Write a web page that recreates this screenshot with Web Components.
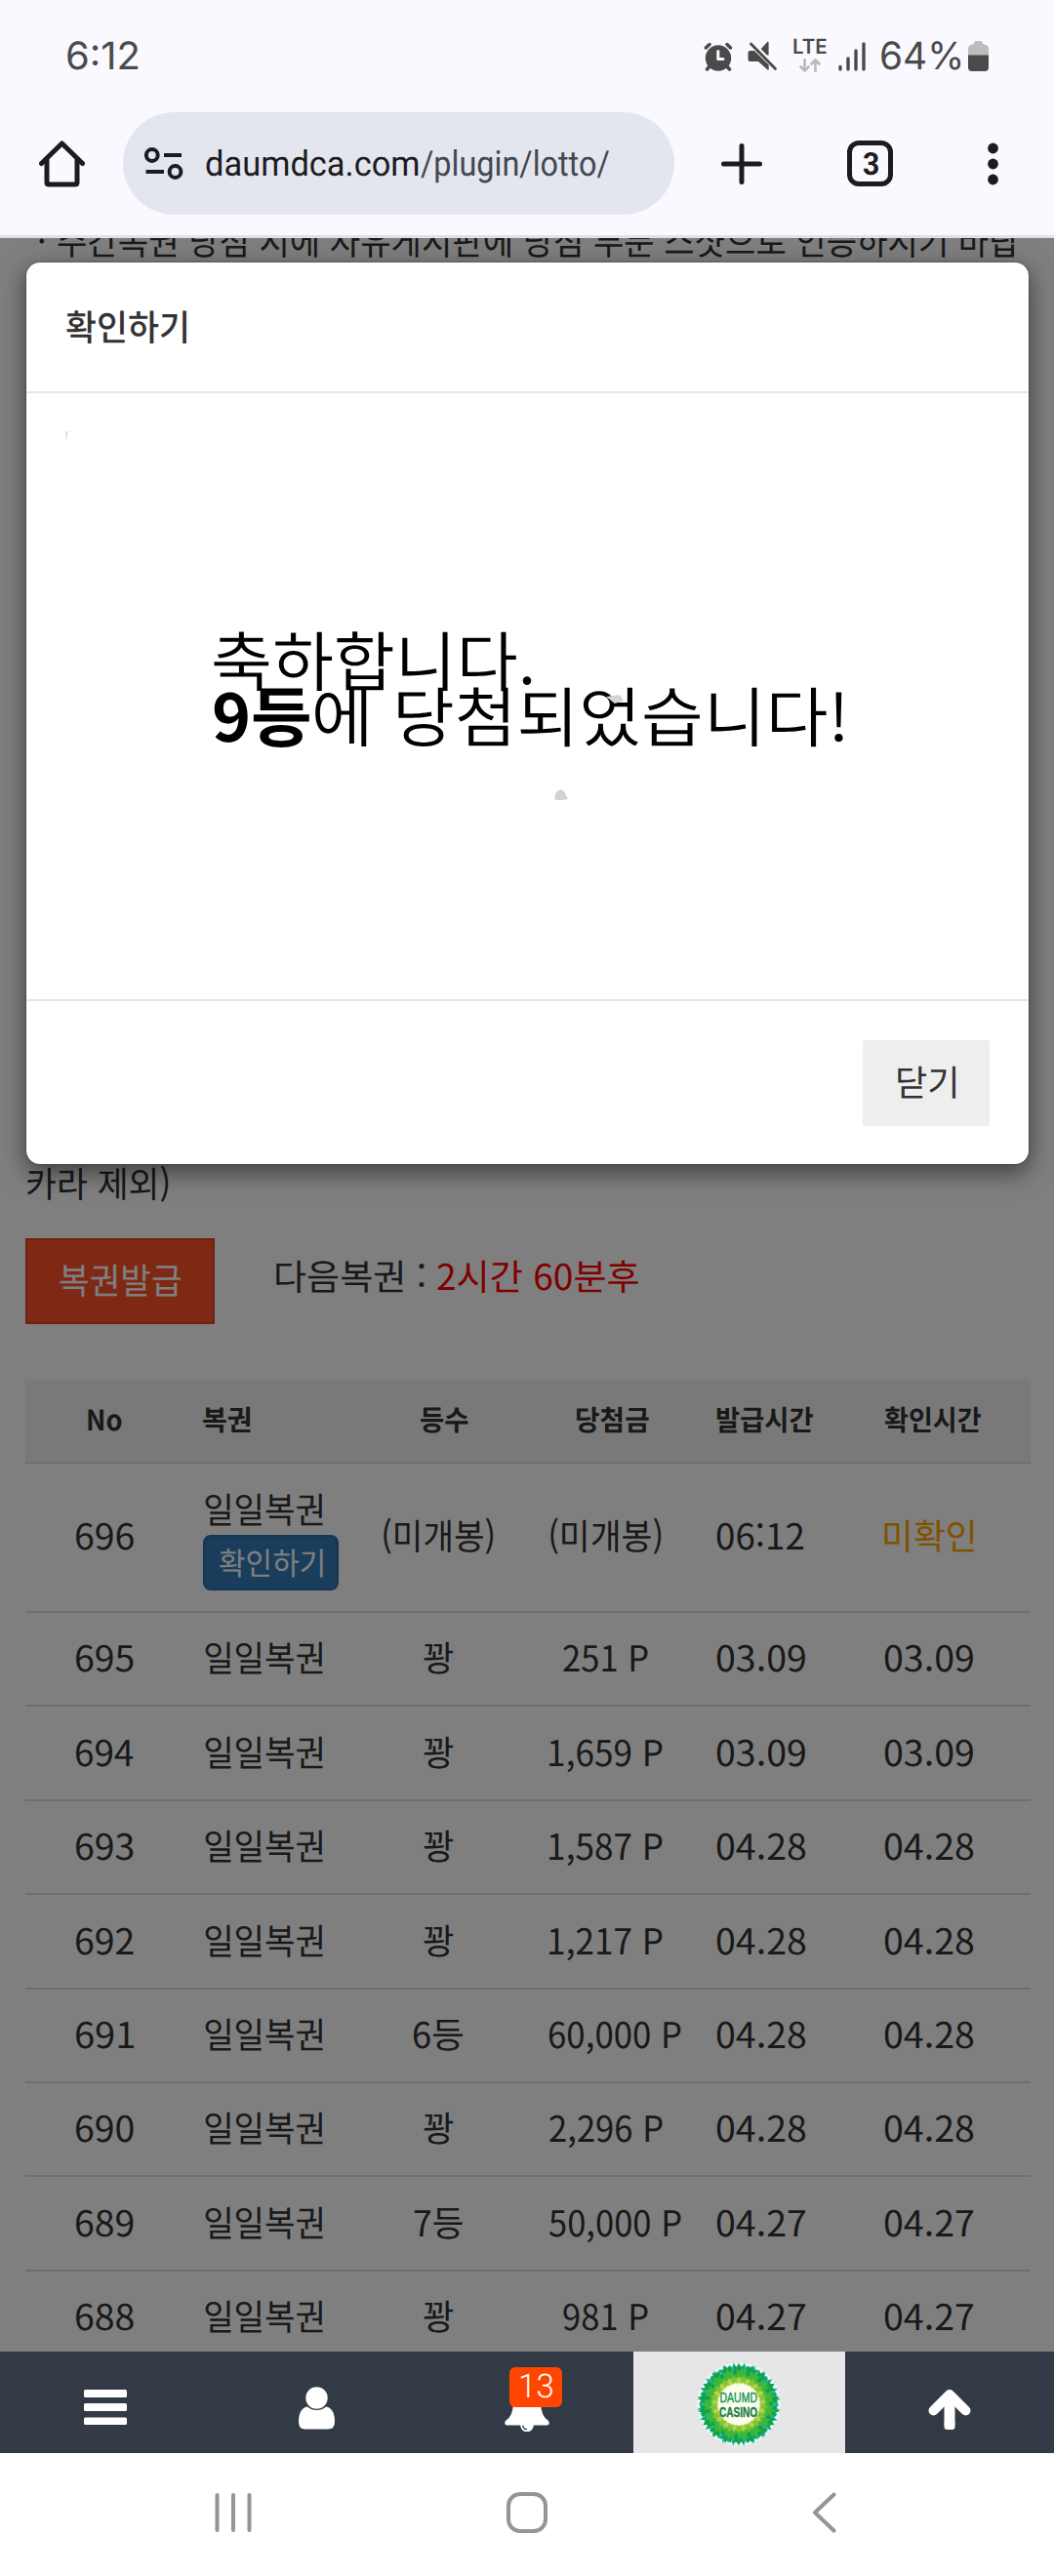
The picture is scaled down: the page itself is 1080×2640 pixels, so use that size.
<!DOCTYPE html>
<html lang="ko">
<head>
<meta charset="utf-8">
<title>복권</title>
<style>
    body {
        margin: 0;
        background: #fff;
        font-family: "Noto Sans CJK KR", sans-serif;
        font-size: 36.6px;
        color: #333;
    }
</style>
</head>
<body>
<phone-screen>
    <status-bar slot="top"></status-bar>
    <browser-toolbar slot="top" tabs="3"></browser-toolbar>
    <lotto-page></lotto-page>
    <lotto-modal slot="overlay" heading="확인하기" close="닫기"></lotto-modal>
    <tab-bar slot="bottom" unread="13"></tab-bar>
    <system-nav slot="bottom"></system-nav>
</phone-screen>

<script>
const measure = document.createElement("canvas").getContext("2d");

// one line of text whose ink is exactly "w" pixels wide
class FitText extends HTMLElement {
    constructor() {
        super();
        this.attachShadow({ mode: "open" });
        this.shadowRoot.innerHTML = /*html*/ `
            <style>
                :host {
                    display: inline-block;
                    flex: none;
                    line-height: 1;
                    white-space: nowrap;
                    text-rendering: geometricPrecision;
                }
                span {
                    display: block;
                    width: max-content;
                    transform-origin: 0 0;
                }
            </style>
            <span><slot></slot></span>
        `;
    }

    connectedCallback() {
        const css = getComputedStyle(this);
        const span = this.shadowRoot.querySelector("span");
        const target = Number(this.getAttribute("w"));
        measure.font = `${css.fontWeight} ${css.fontSize} ${css.fontFamily}`;
        const m = measure.measureText(this.textContent);
        // the laid out advance can differ from the canvas one, the side bearings do not
        const bearings = m.width - m.actualBoundingBoxLeft - m.actualBoundingBoxRight;
        const advance = span.getBoundingClientRect().width || m.width;
        const scale = target / (advance - bearings);
        this.style.width = target + "px";
        span.style.transform = `translateX(${m.actualBoundingBoxLeft * scale}px) scaleX(${scale})`;
    }
}

class PhoneScreen extends HTMLElement {
    constructor() {
        super();
        this.attachShadow({ mode: "open" });
        this.shadowRoot.innerHTML = /*html*/ `
            <style>
                :host {
                    display: flex;
                    flex-direction: column;
                    width: 1080px;
                    height: 2640px;
                    overflow: hidden;
                }
                main {
                    flex: 1;
                    min-height: 0;
                    position: relative;
                    overflow: hidden;
                    background: #fff;
                }
                .backdrop {
                    position: absolute;
                    inset: 0;
                    background: rgba(0, 0, 0, 0.5);
                }
            </style>
            <slot name="top"></slot>
            <main>
                <slot></slot>
                <div class="backdrop"><slot name="overlay"></slot></div>
            </main>
            <slot name="bottom"></slot>
        `;
    }
}

class StatusBar extends HTMLElement {
    constructor() {
        super();
        this.attachShadow({ mode: "open" });
        this.shadowRoot.innerHTML = /*html*/ `
            <style>
                :host {
                    display: flex;
                    align-items: center;
                    height: 115px;
                    box-sizing: border-box;
                    padding: 0 67px 0 69px;
                    background: #faf9ff;
                    color: #4a4a4a;
                    font: 400 39px Inter, sans-serif;
                }
                .time { margin-right: auto; }
                .pct { margin: 0 8px 0 16px; }
                svg { flex: none; fill: none; }
                .mute { margin-left: 15px; }
                .net {
                    display: flex;
                    flex-direction: column;
                    align-items: center;
                    gap: 3px;
                    margin: 0 11px 0 16px;
                    font-size: 21px;
                    font-weight: 600;
                }
                .net fit-text { height: 16px; line-height: 16px; }
            </style>
            <fit-text class="time" w="72">6:12</fit-text>
            <svg width="30" height="30" viewBox="0 0 30 30" stroke="#4a4a4a" stroke-width="4" stroke-linecap="round">
                <path d="M2.300 6 L6 2.500 M24 2.500 L27.500 6" stroke-width="3.500"/>
                <path d="M7 24 L3.500 28 M23 24 L26.500 28" stroke-width="3.500"/>
                <circle cx="15" cy="16.500" r="13.200" fill="#4a4a4a" stroke="none"/>
                <path d="M14.800 9.500 V17.500 H20" stroke="#faf9ff" stroke-width="3" stroke-linejoin="round"/>
            </svg>
            <svg class="mute" width="31" height="31" viewBox="0 0 31 31">
                <path d="M11.800 10.200 L20.500 .8 Q21.600 .6 21.600 1.800 V14.500 L18.500 14.500 L12 9 Z" fill="#4a4a4a"/>
                <path d="M6 4.500 L28.500 27.500" stroke="#faf9ff" stroke-width="6"/>
                <path d="M3.500 3 L28.500 28.500" stroke="#4a4a4a" stroke-width="2.800" stroke-linecap="round"/>
                <path d="M2.500 10 H7 L21.700 24.500 V29 Q21.700 30.300 20.500 29.600 L11 21 H2.500 Q.5 21 .5 19 V12 Q.5 10 2.500 10 Z" fill="#4a4a4a"/>
            </svg>
            <div class="net">
                <fit-text w="34">LTE</fit-text>
                <svg width="22" height="14" viewBox="0 0 22 14" stroke="#b9b9bb" stroke-width="2.600" stroke-linecap="round" stroke-linejoin="round">
                    <path d="M5.500 1 V12.500 M1.500 8.500 L5.500 12.500 L9.500 8.500 M16.500 13 V1.500 M12.500 5.500 L16.500 1.500 L20.500 5.500"/>
                </svg>
            </div>
            <svg width="29" height="30" viewBox="0 0 29 30" stroke="#4a4a4a" stroke-width="3.400" stroke-linecap="round">
                <path d="M3 25.500 V28 M11 17 V28 M19 9 V28 M27 2 V28"/>
            </svg>
            <fit-text class="pct" w="81">64%</fit-text>
            <svg width="21" height="31" viewBox="0 0 21 31">
                <path d="M6 3 Q6 0 8 0 H13 Q15 0 15 3 L18 4 Q21 5 21 8 V15 H0 V8 Q0 5 3 4 Z" fill="#bdbcbf"/>
                <path d="M0 14.500 H21 V27 Q21 31 17 31 H4 Q0 31 0 27 Z" fill="#4a4a4a"/>
            </svg>
        `;
    }
}

class BrowserToolbar extends HTMLElement {
    constructor() {
        super();
        this.attachShadow({ mode: "open" });
        const tabs = this.getAttribute("tabs");
        this.shadowRoot.innerHTML = /*html*/ `
            <style>
                :host {
                    display: flex;
                    align-items: center;
                    height: 129px;
                    box-sizing: border-box;
                    padding: 0 57px 21px 40px;
                    border-bottom: 3px solid #e0e1ea;
                    background: #faf9ff;
                    color: #1c1b20;
                    font-family: Roboto, sans-serif;
                }
                svg { flex: none; fill: none; stroke: #1c1b20; }
                .url {
                    display: flex;
                    align-items: center;
                    width: 565px;
                    height: 105px;
                    box-sizing: border-box;
                    margin: 0 48px 0 39px;
                    padding-left: 22px;
                    border-radius: 53px;
                    background: #e3e6ef;
                    font-size: 36px;
                }
                .host { margin-left: 23px; }
                .path { margin-left: 2px; color: #44474f; }
                .tabs {
                    display: flex;
                    align-items: center;
                    justify-content: center;
                    width: 47px;
                    height: 47px;
                    box-sizing: border-box;
                    margin: 0 97px 0 87px;
                    border: 5px solid #1c1b20;
                    border-radius: 12px;
                    font-size: 32px;
                    font-weight: 700;
                }
            </style>
            <svg width="47" height="48" viewBox="0 0 47 48" stroke-width="5" stroke-linecap="round" stroke-linejoin="round">
                <path d="M2.500 23.500 L23.500 3 L44.500 23.500"/>
                <path d="M8 20 V43 Q8 45 10 45 H37 Q39 45 39 43 V20"/>
            </svg>
            <div class="url">
                <svg width="40" height="34" viewBox="0 0 40 34" stroke-width="4">
                    <circle cx="7.800" cy="8" r="5.900"/>
                    <path d="M20 8 H38 M1.500 25 H20"/>
                    <circle cx="31.500" cy="25" r="5.900"/>
                </svg>
                <fit-text class="host" w="218">daumdca.com</fit-text>
                <fit-text class="path" w="193">/plugin/lotto/</fit-text>
            </div>
            <svg width="42" height="42" viewBox="0 0 42 42" stroke-width="5" stroke-linecap="round">
                <path d="M21 2.500 V39.500 M2.500 21 H39.500"/>
            </svg>
            <div class="tabs"><fit-text w="16">${tabs}</fit-text></div>
            <svg width="11" height="44" viewBox="0 0 11 44" style="fill: #1c1b20; stroke: none">
                <circle cx="5.500" cy="6" r="5.400"/><circle cx="5.500" cy="22" r="5.400"/><circle cx="5.500" cy="38" r="5.400"/>
            </svg>
        `;
    }
}

class LottoPage extends HTMLElement {
    constructor() {
        super();
        this.attachShadow({ mode: "open" });
        this.shadowRoot.innerHTML = /*html*/ `
            <style>
                :host { display: flow-root; padding: 0 24px 0 26px; }
                .notice { display: flex; align-items: center; height: 37px; }
                .notice.first { margin: -16px 0 929px 15px; }
                .notice.last { margin-left: 2px; }
                .first fit-text + fit-text { margin-left: 14px; }
                .issue { display: flex; align-items: center; margin: 38px 0 57px; }
                button {
                    width: 194px;
                    height: 88px;
                    padding: 0 0 5px;
                    border: 2px solid #d9441f;
                    background: #ff5029;
                    color: #fff;
                    font: inherit;
                }
                .next { margin-left: 63px; padding-bottom: 12px; display: flex; gap: 13px; }
                .red { color: #f00; }
            </style>
            <div class="notice first"><fit-text w="4">·</fit-text><fit-text w="985">주간복권 당첨 시에 자유게시판에 당첨 부분 스샷으로 인증하시기 바랍</fit-text></div>
            <div class="notice last"><fit-text w="144">카라 제외)</fit-text></div>
            <div class="issue">
                <button><fit-text w="124">복권발급</fit-text></button>
                <div class="next">
                    <fit-text w="152">다음복권 :</fit-text>
                    <fit-text class="red" w="206">2시간 60분후</fit-text>
                </div>
            </div>
            <lotto-table></lotto-table>
        `;
    }
}

class LottoTable extends HTMLElement {
    #rows = [
        ["695", "꽝", "251 P", "03.09"],
        ["694", "꽝", "1,659 P", "03.09"],
        ["693", "꽝", "1,587 P", "04.28"],
        ["692", "꽝", "1,217 P", "04.28"],
        ["691", "6등", "60,000 P", "04.28"],
        ["690", "꽝", "2,296 P", "04.28"],
        ["689", "7등", "50,000 P", "04.27"],
        ["688", "꽝", "981 P", "04.27"],
    ];

    constructor() {
        super();
        this.attachShadow({ mode: "open" });

        // ink width of a prize depends on its number of characters
        const prizeWidth = { 5: 87, 7: 116, 8: 136 };

        const body = this.#rows.map(([no, rank, prize, date]) => /*html*/ `
            <div class="row">
                <div><fit-text w="60">${no}</fit-text></div>
                <div><fit-text w="120.600">일일복권</fit-text></div>
                <div><fit-text w="${rank === "꽝" ? 31 : 50}">${rank}</fit-text></div>
                <div><fit-text w="${prizeWidth[prize.length]}">${prize}</fit-text></div>
                <div><fit-text w="91.500">${date}</fit-text></div>
                <div><fit-text w="91.500">${date}</fit-text></div>
            </div>
        `).join("");

        this.shadowRoot.innerHTML = /*html*/ `
            <style>
                :host { display: block; }
                .row {
                    display: grid;
                    grid-template-columns: 162px 183px 156px 207px 172px 150px;
                    height: 96.4px;
                    box-sizing: border-box;
                    border-bottom: 2px solid #ddd;
                }
                .row > div {
                    display: flex;
                    align-items: center;
                    justify-content: safe center;
                    padding-bottom: 3px;
                }
                .row > :nth-child(2) { justify-content: flex-start; padding-left: 22px; }
                .row > :nth-child(4) { padding-left: 35px; padding-right: 55px; }
                .row > :nth-child(5), .row > :nth-child(6) { justify-content: flex-start; }
                .head {
                    height: 86px;
                    background: #f2f2f2;
                    font-size: 29px;
                    font-weight: 700;
                }
                .head > :nth-child(2) { padding-left: 20px; }
                .head > :nth-child(3) { padding-left: 12px; }
                .head > :nth-child(4) { padding-left: 47px; padding-right: 53px; }
                .open { height: 153px; }
                .open > div { padding-bottom: 5px; }
                .open > .ticket {
                    flex-direction: column;
                    align-items: flex-start;
                    justify-content: flex-start;
                    padding-top: 27.500px;
                    padding-left: 20px;
                }
                .ticket > fit-text { margin-left: 2px; }
                button {
                    width: 139px;
                    height: 57px;
                    margin-top: 9px;
                    padding: 0 0 3px;
                    border: 2px solid #2e6da4;
                    border-radius: 8px;
                    background: #337ab7;
                    color: #fff;
                    font: inherit;
                    font-size: 32px;
                    line-height: 1;
                }
                .orange { color: orange; }
            </style>
            <div class="row head">
                <div><fit-text w="34.500">No</fit-text></div>
                <div><fit-text w="49">복권</fit-text></div>
                <div><fit-text w="49">등수</fit-text></div>
                <div><fit-text w="74">당첨금</fit-text></div>
                <div><fit-text w="99">발급시간</fit-text></div>
                <div><fit-text w="99">확인시간</fit-text></div>
            </div>
            <div class="row open">
                <div><fit-text w="60">696</fit-text></div>
                <div class="ticket"><fit-text w="120.600">일일복권</fit-text><button><fit-text w="106">확인하기</fit-text></button></div>
                <div><fit-text w="112">(미개봉)</fit-text></div>
                <div><fit-text w="113">(미개봉)</fit-text></div>
                <div><fit-text w="89.500">06:12</fit-text></div>
                <div><fit-text class="orange" w="92">미확인</fit-text></div>
            </div>
            ${body}
        `;
    }
}

class LottoModal extends HTMLElement {
    constructor() {
        super();
        this.attachShadow({ mode: "open" });
        this.shadowRoot.innerHTML = /*html*/ `
            <style>
                :host {
                    display: flex;
                    flex-direction: column;
                    width: 1029px;
                    margin: 24px 0 0 26px;
                    border: 1.500px solid rgba(0, 0, 0, 0.2);
                    box-sizing: border-box;
                    border-radius: 15px;
                    background: #fff;
                    background-clip: padding-box;
                    box-shadow: 0 8px 25px rgba(0, 0, 0, 0.5);
                }
                header {
                    display: flex;
                    align-items: center;
                    height: 132px;
                    box-sizing: border-box;
                    padding: 0 0 2px 41px;
                    font-weight: 500;
                }
                .body {
                    position: relative;
                    height: 625px;
                    box-sizing: border-box;
                    padding: 243px 0 0 192px;
                    border: solid #e5e5e5;
                    border-width: 2px 0;
                    color: #000;
                    font-size: 67px;
                    font-weight: 350;
                }
                .line { display: flex; height: 57px; }
                .line fit-text { line-height: 57px; }
                .line b { display: contents; font-weight: 700; }
                .line b + fit-text { margin-left: 6px; }
                /* leftovers of the scratch-off cover */
                .body svg { position: absolute; inset: 0; }
                footer {
                    display: flex;
                    justify-content: flex-end;
                    height: 167px;
                    box-sizing: border-box;
                    padding: 40px 40px 0 0;
                }
                button {
                    width: 130px;
                    height: 88px;
                    padding: 0 0 6px;
                    border: 0;
                    background: #eee;
                    color: #333;
                    font: inherit;
                }
            </style>
            <header><fit-text w="123.500">${this.getAttribute("heading")}</fit-text></header>
            <div class="body">
                <div class="line"><fit-text w="326">축하합니다.</fit-text></div>
                <div class="line"><b><fit-text w="98">9등</fit-text></b><fit-text w="541">에 당첨되었습니다!</fit-text></div>
                <svg width="1026" height="621" viewBox="0 0 1026 621">
                    <path d="M40 39 h3 l-2.500 12 Z" fill="#e2e2e2"/>
                    <path d="M541 415 L543 409 L547 406 L551 408 L555 416 L549 417 L543 417 Z" fill="#d2d2d2"/>
                    <path d="M594 311 L608 309 L612 315 L603 318 Z" fill="#d4d4d4"/>
                </svg>
            </div>
            <footer><button><fit-text w="59">${this.getAttribute("close")}</fit-text></button></footer>
        `;
    }
}

class CasinoLogo extends HTMLElement {
    constructor() {
        super();
        this.attachShadow({ mode: "open" });

        const ring = (count, radius, id, fill, offset = 0) => {
            let out = "";
            for (let i = 0; i < count; i++) {
                const angle = (360 / count) * i + offset;
                out += `<use href="#${id}" fill="${fill}" transform="rotate(${angle}) translate(0 ${-radius})"/>`;
            }
            return out;
        };

        this.shadowRoot.innerHTML = /*html*/ `
            <style>
                :host { display: block; width: 88px; height: 88px; }
                text { font-family: "Liberation Sans Narrow", "Liberation Sans", sans-serif; }
            </style>
            <svg width="88" height="88" viewBox="-44 -44 88 88">
                <defs>
                    <path id="leaf" d="M0 -8.500 L2 -4 L6 -6 L4.500 -1 L8 2 L3.500 3 L3 8 L0 5 L-3 8 L-3.500 3 L-8 2 L-4.500 -1 L-6 -6 L-2 -4 Z"/>
                    <path id="flower" d="M0 -4.500 L1.300 -1.800 L4.300 -1.600 L2.200 .8 L2.800 4 L0 2.500 L-2.800 4 L-2.200 .8 L-4.300 -1.600 L-1.300 -1.800 Z"/>
                </defs>
                <circle r="42.500" fill="#eefaf2"/>
                ${ring(24, 34.5, "leaf", "#19b5a5", 8)}
                <circle r="34" fill="#3faf3c"/>
                ${ring(18, 34, "leaf", "#12a04a")}
                ${ring(15, 30, "leaf", "#3cb83c", 5)}
                <circle r="25" fill="#a9cf45"/>
                <circle r="22" fill="#fbfdea"/>
                ${ring(17, 24.5, "flower", "#b3d452")}
                ${ring(17, 26, "flower", "#86c22f", 10)}
                <text x="-19.500" y="-1.800" font-size="14" textLength="38.500" lengthAdjust="spacingAndGlyphs" fill="#129255" stroke="#129255" stroke-width=".4">DAUMD</text>
                <text x="-20" y="12.500" font-size="15" font-weight="700" textLength="39" lengthAdjust="spacingAndGlyphs" fill="#1d7a4c" stroke="#1d7a4c" stroke-width=".4">CASINO</text>
            </svg>
        `;
    }
}

class TabBar extends HTMLElement {
    constructor() {
        super();
        this.attachShadow({ mode: "open" });
        this.shadowRoot.innerHTML = /*html*/ `
            <style>
                :host {
                    display: grid;
                    grid-template-columns: 216px 216px 217px 217px 214px;
                    height: 104px;
                    background: #323b45;
                }
                div { display: flex; align-items: center; justify-content: center; }
                .bell { position: relative; }
                .badge {
                    position: absolute;
                    left: 90px;
                    top: 16px;
                    width: 54px;
                    height: 41px;
                    box-sizing: border-box;
                    padding-bottom: 2px;
                    border-radius: 6px;
                    background: #ff4500;
                    color: #fff;
                    font: 300 34px Roboto, sans-serif;
                }
                .logo { background: #e6e6e6; padding: 3px 2px 0 0; }
                .bell svg { margin: 18px 2px 0 0; }
                .up { padding-right: 1px; }
            </style>
            <div><svg width="44" height="36" viewBox="0 0 44 36" fill="#fff" style="margin-top: 10px">
                <rect y="0" width="44" height="8" rx="1.500"/><rect y="14" width="44" height="8" rx="1.500"/><rect y="28.500" width="44" height="7.500" rx="1.500"/>
            </svg></div>
            <div><svg width="37" height="44" viewBox="0 0 37 44" fill="#fff" style="margin-top: 11px">
                <path d="M9 20.500 Q0 22 0 36 Q0 43.500 6.500 43.500 H30 Q37 43.500 37 36 Q37 22 28 20.500 Q24 24 18.500 24 Q13 24 9 20.500 Z"/>
                <circle cx="18.500" cy="11.500" r="11.200"/>
            </svg></div>
            <div class="bell">
                <svg width="46" height="42" viewBox="0 0 46 42" fill="#fff">
                    <path d="M23 0 Q9 2 9 12 Q9 26 1 31 Q-1 35 2.500 35.500 H43.500 Q47 35 45 31 Q37 26 37 12 Q37 2 23 0 Z"/>
                    <circle cx="23" cy="35.500" r="6.800"/>
                    <path d="M18.800 35.500 Q19 39.500 23 39.700" fill="none" stroke="#323b45" stroke-width="1.200"/>
                </svg>
                <div class="badge"><fit-text w="33">${this.getAttribute("unread")}</fit-text></div>
            </div>
            <div class="logo"><casino-logo></casino-logo></div>
            <div class="up"><svg width="46" height="43" viewBox="0 0 46 43" fill="none" stroke="#fff" stroke-width="10" style="margin-top: 12px">
                <path d="M23 8 V38" stroke-width="11" stroke-linecap="butt"/>
                <path d="M17.500 36 V40 Q17.500 43 20.500 43 H25.500 Q28.500 43 28.500 40 V36 Z" fill="#fff" stroke="none"/>
                <path d="M6.500 23.500 L23 7 L39.500 23.500" stroke-linecap="round" stroke-linejoin="round"/>
            </svg></div>
        `;
    }
}

class SystemNav extends HTMLElement {
    constructor() {
        super();
        this.attachShadow({ mode: "open" });
        this.shadowRoot.innerHTML = /*html*/ `
            <style>
                :host {
                    display: flex;
                    justify-content: space-between;
                    height: 126px;
                    box-sizing: border-box;
                    padding: 40px 223px 0 220px;
                    background: #fff;
                }
                svg { fill: none; stroke: #959595; stroke-width: 4; stroke-linecap: round; stroke-linejoin: round; }
            </style>
            <svg width="38" height="42" viewBox="0 0 38 42"><path d="M2.500 3 V39 M19 3 V39 M35.500 3 V39"/></svg>
            <svg width="42" height="42" viewBox="0 0 42 42" style="margin-left: -10px"><rect x="2" y="2" width="38" height="38" rx="12"/></svg>
            <svg width="25" height="42" viewBox="0 0 25 42"><path d="M22.500 2.500 L3 21 L22.500 39.500"/></svg>
        `;
    }
}

customElements.define("fit-text", FitText);
customElements.define("casino-logo", CasinoLogo);
customElements.define("phone-screen", PhoneScreen);
customElements.define("status-bar", StatusBar);
customElements.define("browser-toolbar", BrowserToolbar);
customElements.define("lotto-table", LottoTable);
customElements.define("lotto-page", LottoPage);
customElements.define("lotto-modal", LottoModal);
customElements.define("tab-bar", TabBar);
customElements.define("system-nav", SystemNav);
</script>
</body>
</html>
